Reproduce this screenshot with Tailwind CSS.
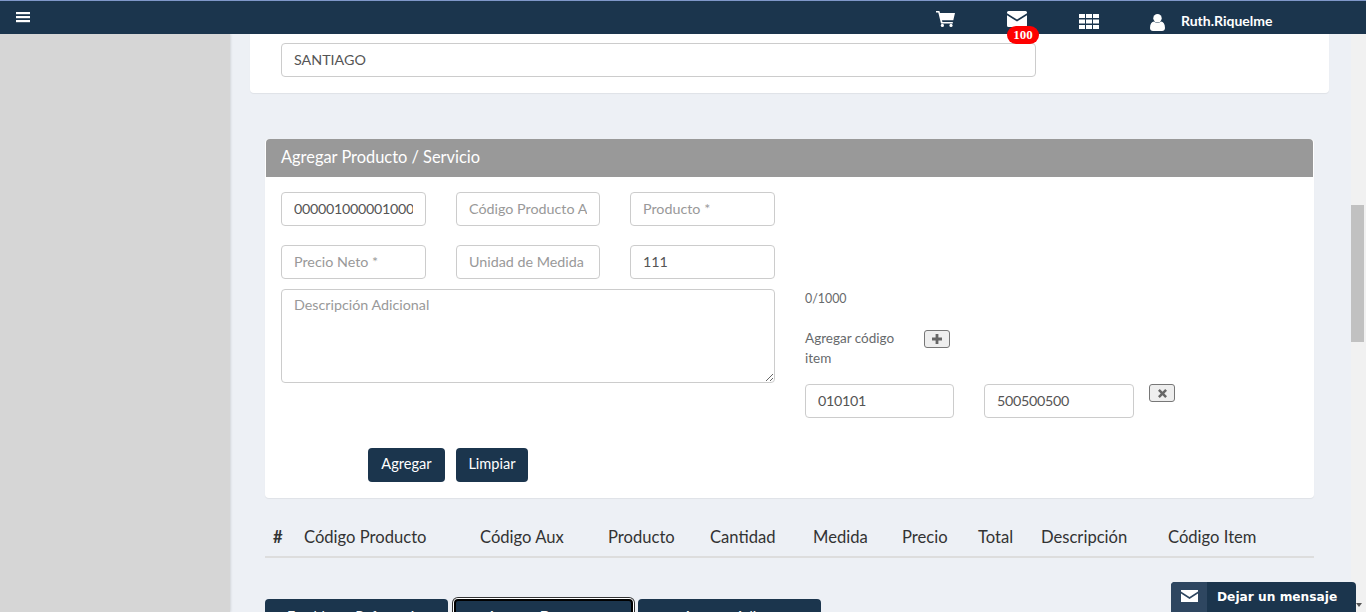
<!DOCTYPE html>
<html lang="es">
<head>
  <meta charset="UTF-8" />
  <title>Agregar Producto / Servicio</title>
  <script src="https://cdn.jsdelivr.net/npm/@tailwindcss/browser@4"></script>
</head>
<body class="h-[612px] overflow-hidden bg-[#edf0f5] font-['Lato',sans-serif] text-[14.3px] text-[#676a6c]">
  <div class="relative h-[612px] w-[1366px] overflow-hidden">

    <!-- TOP BAR -->
    <header class="absolute inset-x-0 top-0 z-20 flex h-[34px] items-start border-t border-[#7f97c9] bg-[#1b354d] text-white">
      <button class="ml-[16px] mt-[10px] w-[14px]">
        <svg class="h-[14px] w-[14px]" viewBox="0 0 14 14" fill="#fff"><rect y="1" width="14" height="2.2"/><rect y="5" width="14" height="2.2"/><rect y="9" width="14" height="2.2"/></svg>
      </button>
      <div class="ml-[906px] flex items-start">
        <svg class="mt-[10px] h-[16px] w-[19px]" viewBox="0 0 19 16" fill="#fff"><path d="M0 0h3.4l.6 2H19l-1.7 7.3H6l.4 1.700h10.400v1.600H5L2.300 1.600H0z"/><circle cx="6.400" cy="14.400" r="1.600"/><circle cx="15" cy="14.400" r="1.600"/></svg>
        <div class="relative ml-[52px] mt-[10px] h-[16px] w-[20px]">
          <svg class="h-[16px] w-[20px]" viewBox="0 0 20 16" fill="#fff"><path d="M1.500 0h17A1.500 1.500 0 0 1 20 1.500v.7l-10 6.400L0 2.200v-.7A1.500 1.500 0 0 1 1.500 0z"/><path d="M0 4.200l10 6.400 10-6.400v10.300a1.500 1.500 0 0 1-1.500 1.500h-17A1.500 1.500 0 0 1 0 14.500z"/></svg>
          <span class="absolute left-0 top-[15px] flex h-[18px] w-[32px] items-center justify-center rounded-full bg-[#fe0000] font-['Liberation_Serif',serif] text-[13px] font-bold text-white">100</span>
        </div>
        <svg class="ml-[52px] mt-[13px] h-[15px] w-[20px]" viewBox="0 0 20 15" fill="#fff"><path d="M0 0h6v4H0zM7 0h6v4H7zM14 0h6v4h-6zM0 5.500h6v4H0zM7 5.500h6v4H7zM14 5.500h6v4h-6zM0 11h6v4H0zM7 11h6v4H7zM14 11h6v4h-6z"/></svg>
        <svg class="ml-[51px] mt-[13px] h-[17px] w-[15px]" viewBox="0 0 15 17" fill="#fff"><circle cx="7.500" cy="4.200" r="4.200"/><path d="M0 14c0-4 1.800-6 4-6.400 1 .9 2.200 1.300 3.500 1.300S10 8.500 11 7.600c2.200.4 4 2.400 4 6.400 0 2-1.300 3-3 3H3c-1.700 0-3-1-3-3z"/></svg>
        <span class="ml-[16px] mt-[13px] text-[14px] font-bold leading-none">Ruth.Riquelme</span>
      </div>
    </header>

    <!-- LEFT PANEL -->
    <aside class="absolute bottom-0 left-0 top-[34px] w-[230px] bg-[#d6d6d6] shadow-[0_0_3px_rgba(0,0,0,0.2)]"></aside>

    <!-- CONTENT -->
    <main class="absolute left-[250px] top-[34px] w-[1079px]">
      <section class="h-[59px] rounded-b-[4px] bg-white pl-[31px] pt-[9px] shadow-[0_1px_1px_rgba(0,0,0,0.06)]">
        <input class="h-[34px] w-[755px] rounded-[4px] border border-[#cccccc] px-[12px] pb-[2px] text-[#555555]" value="SANTIAGO" />
      </section>

      <section class="ml-[15px] mt-[46px] h-[359px] w-[1049px] rounded-[4px] bg-white shadow-[0_1px_1px_rgba(0,0,0,0.06)]">
        <h2 class="mx-[1px] flex h-[38px] items-center rounded-t-[4px] bg-[#999999] pb-[2px] pl-[15px] text-[16.400px] text-white">Agregar Producto / Servicio</h2>

        <div class="flex">
          <div class="ml-[16px] w-[494px]">
            <div class="mt-[15px] flex gap-[30px]">
              <input class="h-[34px] w-[145px] rounded-[4px] border border-[#cccccc] px-[12px] pb-[2px] tracking-[-0.3px] text-[#555555]" value="0000010000010000" />
              <input class="h-[34px] w-[144px] rounded-[4px] border border-[#cccccc] px-[12px] pb-[2px] placeholder:text-[#999999]" placeholder="Código Producto Aux" />
              <input class="h-[34px] w-[145px] rounded-[4px] border border-[#cccccc] px-[12px] pb-[2px] placeholder:text-[#999999]" placeholder="Producto *" />
            </div>
            <div class="mt-[19px] flex gap-[30px]">
              <input class="h-[34px] w-[145px] rounded-[4px] border border-[#cccccc] px-[12px] pb-[2px] placeholder:text-[#999999]" placeholder="Precio Neto *" />
              <input class="h-[34px] w-[144px] rounded-[4px] border border-[#cccccc] px-[12px] pb-[2px] placeholder:text-[#999999]" placeholder="Unidad de Medida" />
              <input class="h-[34px] w-[145px] rounded-[4px] border border-[#cccccc] px-[12px] pb-[2px] text-[#555555]" value="111" />
            </div>
            <textarea class="mt-[10px] block h-[94px] w-[494px] rounded-[4px] border border-[#cccccc] px-[12px] pt-[5px] leading-[20px] placeholder:text-[#999999]" placeholder="Descripción Adicional"></textarea>
          </div>

          <div class="ml-[30px] w-[400px] pt-[112px]">
            <p class="text-[12.400px] leading-[20px]">0/1000</p>
            <div class="mt-[19px] flex items-start">
              <p class="w-[119px] pr-[20px] text-[13.500px] leading-[20px]">Agregar código item</p>
              <button class="mt-[2px] flex h-[18px] w-[26px] items-center justify-center rounded-[3px] border border-[#777777] bg-[#eeeeee]">
                <svg class="h-[10px] w-[10px]" viewBox="0 0 10 10" fill="#666"><path d="M3.600 0h2.800v3.600H10v2.800H6.400V10H3.600V6.400H0V3.600h3.600z"/></svg>
              </button>
            </div>
            <div class="mt-[16px] flex items-start text-[#555555]">
              <input class="h-[34px] w-[149px] rounded-[4px] border border-[#cccccc] px-[12px] pb-[2px] tracking-[-0.3px]" value="010101" />
              <input class="ml-[30px] h-[34px] w-[150px] rounded-[4px] border border-[#cccccc] px-[12px] pb-[2px] tracking-[-0.3px]" value="500500500" />
              <button class="ml-[15px] flex h-[18px] w-[26px] items-center justify-center rounded-[3px] border border-[#777777] bg-[#eeeeee]">
                <svg class="h-[9px] w-[9px]" viewBox="0 0 9 9" fill="#666"><path d="M1.800 0l2.700 2.700L7.200 0 9 1.800 6.300 4.500 9 7.200 7.200 9 4.500 6.300 1.800 9 0 7.200l2.700-2.700L0 1.800z"/></svg>
              </button>
            </div>
          </div>
        </div>

        <div class="ml-[103px] mt-[30px] flex gap-[11px]">
          <button class="h-[34px] w-[77px] rounded-[4px] bg-[#1b354d] pb-[2px] text-[14.600px] text-white">Agregar</button>
          <button class="h-[34px] w-[72px] rounded-[4px] bg-[#1b354d] pb-[2px] text-[14.600px] text-white">Limpiar</button>
        </div>
      </section>

      <!-- TABLE HEADER -->
      <div class="ml-[15px] mt-[20px] flex h-[40px] w-[1049px] items-center border-b-2 border-[#dddddd] pl-[8px] text-[16.600px] text-[#333333]">
        <span class="w-[31px] font-bold">#</span>
        <span class="w-[176px]">Código Producto</span>
        <span class="w-[128px]">Código Aux</span>
        <span class="w-[102px]">Producto</span>
        <span class="w-[103px]">Cantidad</span>
        <span class="w-[89px]">Medida</span>
        <span class="w-[76px]">Precio</span>
        <span class="w-[63px]">Total</span>
        <span class="w-[127px]">Descripción</span>
        <span>Código Item</span>
      </div>

      <!-- TABS -->
      <div class="ml-[15px] mt-[41px] flex text-left leading-[20px] text-white">
        <button class="h-[34px] w-[183px] rounded-[4px] bg-[#1b354d] pl-[22px] text-left">Establecer Referencias</button>
        <button class="ml-[6px] h-[34px] w-[179px] rounded-[4px] border-2 border-black bg-[#1b354d] pl-[31px] text-left shadow-[0_0_0_1px_#fff,0_0_0_2px_#333]">Agregar Descuentos</button>
        <button class="ml-[5px] h-[34px] w-[183px] rounded-[4px] bg-[#1b354d] pl-[45px] text-left">Agregar Adjunto</button>
      </div>
    </main>

    <!-- SCROLLBAR -->
    <div class="absolute bottom-0 right-0 top-[34px] w-[15px] bg-[#f1f1f1]">
      <div class="absolute left-0 top-[171px] h-[137px] w-[13px] bg-[#c1c1c1]"></div>
    </div>

    <!-- CHAT WIDGET -->
    <div class="absolute bottom-0 left-[1171px] z-10 flex h-[30px] w-[185px] overflow-hidden rounded-t-[4px] bg-[#1b354d] text-white">
      <div class="flex w-[36px] items-center justify-center bg-[#2e4660] pb-[2px]">
        <svg class="h-[12px] w-[17px]" viewBox="0 0 17 12" fill="#fff"><path d="M0 0h17v1.500L8.500 7 0 1.500z"/><path d="M0 3.500l8.500 5.500L17 3.500V12H0z"/></svg>
      </div>
      <span class="ml-[10px] mt-[9px] font-['DejaVu_Sans',sans-serif] text-[12.200px] font-bold leading-none">Dejar un mensaje</span>
    </div>
    <div class="absolute bottom-[5px] left-[1356px] z-10 h-0 w-0 border-x-[3px] border-t-[4px] border-x-transparent border-t-[#555555]"></div>
  </div>
</body>
</html>
